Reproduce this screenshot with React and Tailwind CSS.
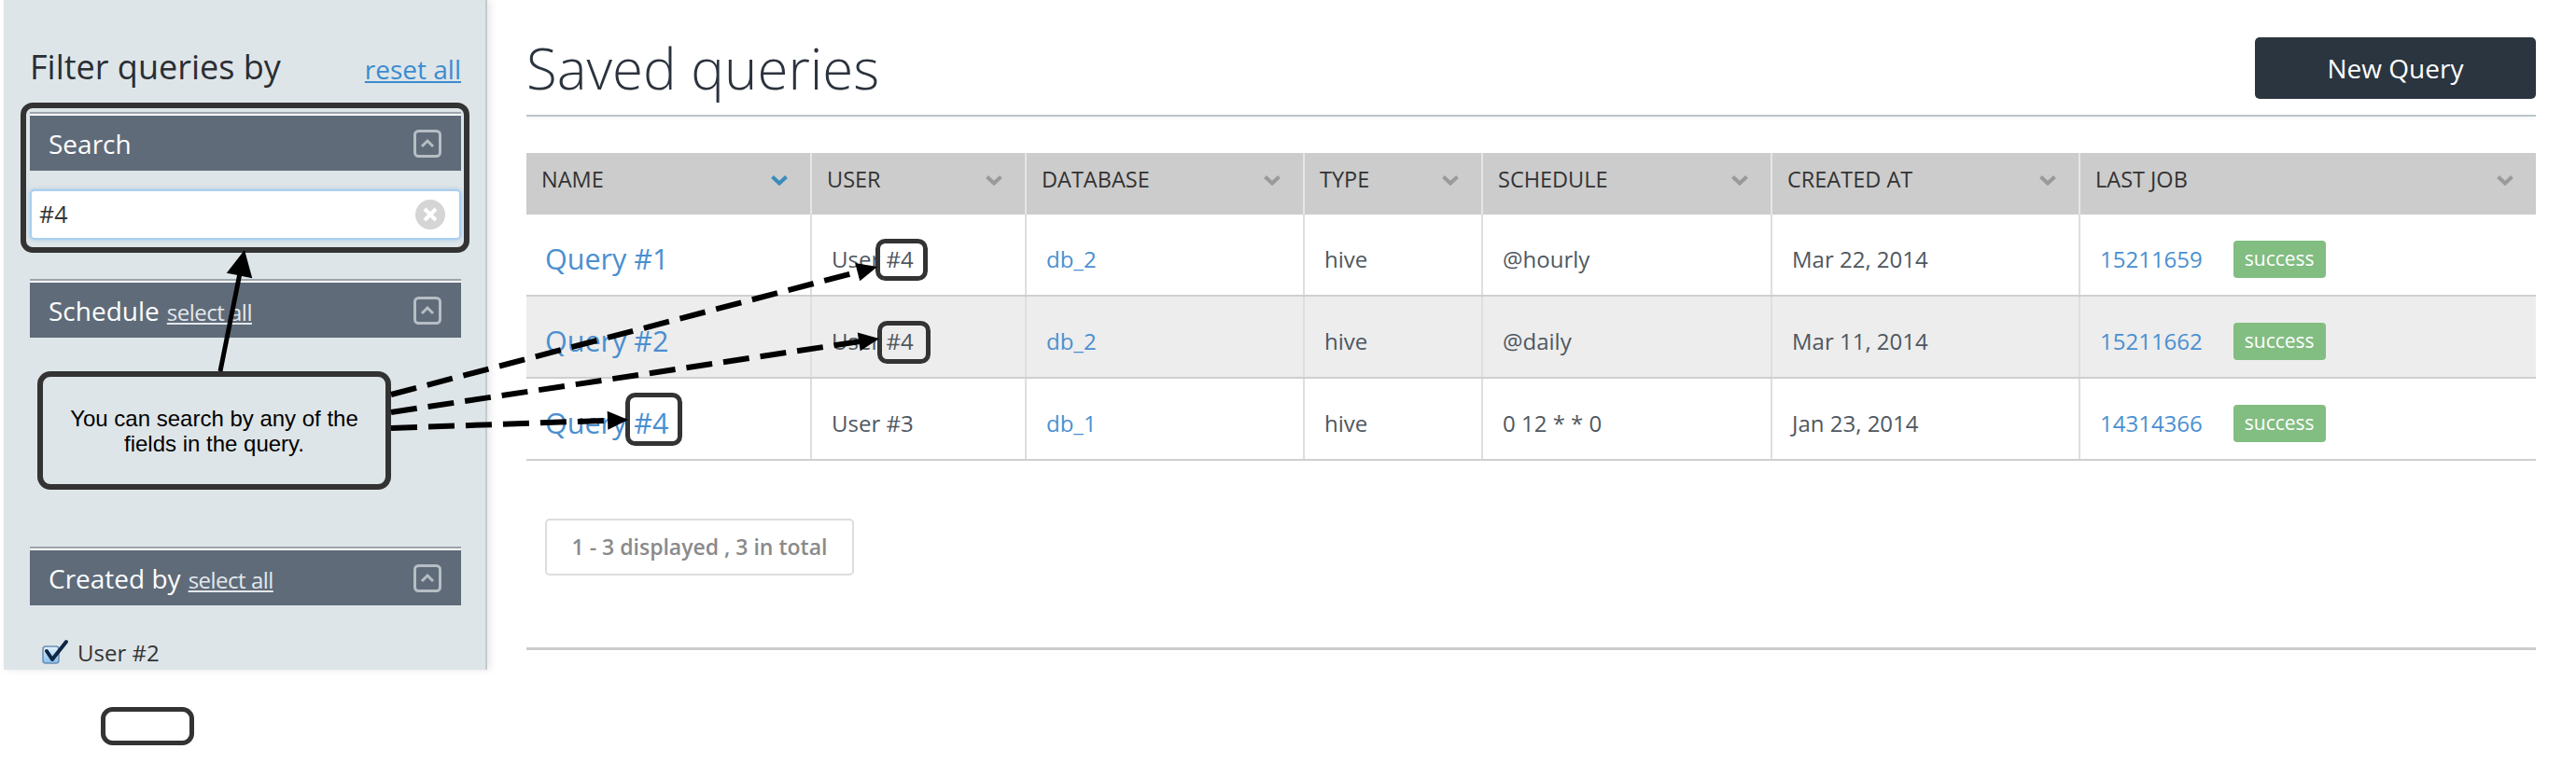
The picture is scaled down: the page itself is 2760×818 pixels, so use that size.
import React from "react";

const cols = "grid-cols-[304px_230px_298px_191px_310px_330px_490px]";

function Chevron({ color }) {
  return (
    <svg width="20" height="12" viewBox="0 0 20 12">
      <polyline points="2.5,2.5 10,9.5 17.5,2.5" fill="none" stroke={color} strokeWidth="4" strokeLinejoin="miter" />
    </svg>
  );
}

function CollapseIcon() {
  return (
    <svg width="30" height="30" viewBox="0 0 30 30">
      <rect x="1.5" y="1.5" width="27" height="27" rx="4" fill="none" stroke="#b6bdc4" strokeWidth="3" />
      <polyline points="9,18 15,12 21,18" fill="none" stroke="#b6bdc4" strokeWidth="3" />
    </svg>
  );
}

function ClearIcon() {
  return (
    <svg width="32" height="32" viewBox="0 0 32 32">
      <circle cx="16" cy="16" r="16" fill="#d5d5d5" />
      <line x1="10" y1="10" x2="22" y2="22" stroke="#fff" strokeWidth="4" />
      <line x1="22" y1="10" x2="10" y2="22" stroke="#fff" strokeWidth="4" />
    </svg>
  );
}

function CheckIcon() {
  return (
    <svg width="32" height="30" viewBox="0 0 32 30">
      <defs>
        <linearGradient id="cbg" x1="0" y1="0" x2="0" y2="1">
          <stop offset="0" stopColor="#e4f2fc" />
          <stop offset="1" stopColor="#86bfee" />
        </linearGradient>
      </defs>
      <rect x="2" y="8" width="17" height="18" rx="3" fill="url(#cbg)" stroke="#6a8fb3" strokeWidth="1.5" />
      <polyline points="6,13 12,22 27,3" fill="none" stroke="#0f2745" strokeWidth="4" strokeLinecap="round" strokeLinejoin="round" />
    </svg>
  );
}

function PanelHeader({ title, selectAll }) {
  return (
    <div>
      <div className="h-[2px] bg-[#9ba4aa]" />
      <div className="h-[2px] bg-white" />
      <div className="h-[59px] bg-[#5f6b79] flex items-center justify-between pl-[20px] pr-[21px]">
        <div className="flex items-baseline">
          <span className="text-white text-[28px]">{title}</span>
          {selectAll && (
            <span className="ml-[8px] text-[24px] text-[#e3e7eb] underline tracking-[-0.5px]">select all</span>
          )}
        </div>
        <CollapseIcon />
      </div>
    </div>
  );
}

function Sidebar() {
  return (
    <aside className="ml-[4px] w-[518px] h-[718px] shrink-0 bg-[#dee5e8] border-r-2 border-[#c4cbcf] shadow-[3px_0_8px_rgba(0,0,0,0.10)] pl-[28px] pr-[26px] pt-[52px] flex flex-col">
      <div className="flex items-baseline justify-between h-[40px] leading-[40px]">
        <span className="text-[36px] text-[#2a2e33]">Filter queries by</span>
        <span className="text-[28px] text-[#3b8bd0] underline">reset all</span>
      </div>
      <div className="mt-[28px]">
        <PanelHeader title="Search" />
      </div>
      <div className="mt-[20px] h-[54px] bg-white border-2 border-[#a9cff0] rounded-[5px] flex items-center justify-between pl-[8px] pr-[15px] shadow-[0_0_4px_rgba(100,170,230,0.5)]">
        <span className="text-[25px] text-[#333]">#4</span>
        <ClearIcon />
      </div>
      <div className="mt-[42px]">
        <PanelHeader title="Schedule" selectAll />
      </div>
      <div className="mt-[224px]">
        <PanelHeader title="Created by" selectAll />
      </div>
      <div className="mt-[36px] flex items-center h-[30px] pl-[12px]">
        <CheckIcon />
        <span className="ml-[7px] text-[24px] text-[#333]">User #2</span>
      </div>
    </aside>
  );
}

const headers = ["NAME", "USER", "DATABASE", "TYPE", "SCHEDULE", "CREATED AT", "LAST JOB"];

const rows = [
  { name: "Query #1", user: "User #4", db: "db_2", type: "hive", sched: "@hourly", created: "Mar 22, 2014", job: "15211659", bg: "bg-white" },
  { name: "Query #2", user: "User #4", db: "db_2", type: "hive", sched: "@daily", created: "Mar 11, 2014", job: "15211662", bg: "bg-[#ededed]" },
  { name: "Query #4", user: "User #3", db: "db_1", type: "hive", sched: "0 12 * * 0", created: "Jan 23, 2014", job: "14314366", bg: "bg-white" },
];

function Cell({ first, children }) {
  return (
    <div className={"flex items-center pt-[10px] " + (first ? "pl-[20px]" : "pl-[21px] border-l-2 border-[#dedede]")}>
      {children}
    </div>
  );
}

function Main() {
  return (
    <main className="ml-[42px] w-[2153px] shrink-0 pt-[40px] flex flex-col">
      <div className="flex justify-between items-start h-[66px]">
        <h1 className="text-[60px] font-light leading-[66px] text-[#2b333d]">Saved queries</h1>
        <button className="w-[301px] h-[66px] bg-[#2b3540] rounded-[5px] text-white text-[28px]">New Query</button>
      </div>
      <div className="mt-[17px] h-[2px] bg-[#bac4c8] shadow-[0_2px_3px_rgba(0,0,0,0.06)]" />
      <div className="mt-[39px]">
        <div className={"grid " + cols + " h-[66px] bg-[#cccccc]"}>
          {headers.map((h, i) => (
            <div
              key={h}
              className={"flex items-center justify-between pb-[8px] pr-[23px] " + (i === 0 ? "pl-[16px]" : "pl-[16px] border-l-2 border-[#e6e6e6]")}
            >
              <span className="text-[23.5px] text-[#333]">{h}</span>
              <Chevron color={i === 0 ? "#3a8cba" : "#9a9a9a"} />
            </div>
          ))}
        </div>
        {rows.map((r) => (
          <div key={r.name} className={"grid " + cols + " h-[88px] border-b-2 border-[#cfcfcf] " + r.bg}>
            <Cell first>
              <span className="text-[30.5px] text-[#4a8fd1]">{r.name}</span>
            </Cell>
            <Cell>
              <span className="text-[24px] text-[#4f5760]">{r.user}</span>
            </Cell>
            <Cell>
              <span className="text-[24px] text-[#4a8fd1]">{r.db}</span>
            </Cell>
            <Cell>
              <span className="text-[24px] text-[#4f5760]">{r.type}</span>
            </Cell>
            <Cell>
              <span className="text-[24px] text-[#4f5760]">{r.sched}</span>
            </Cell>
            <Cell>
              <span className="text-[24px] text-[#4f5760]">{r.created}</span>
            </Cell>
            <Cell>
              <span className="text-[24px] text-[#4a8fd1]">{r.job}</span>
              <span className="ml-[33px] h-[40px] px-[12px] flex items-center bg-[#82bd82] rounded-[4px] text-white text-[21px]">success</span>
            </Cell>
          </div>
        ))}
      </div>
      <div className="mt-[62px] ml-[20px] w-[331px] h-[61px] border-2 border-[#dddddd] rounded-[5px] flex items-center justify-center">
        <span className="text-[23px] font-semibold text-[#8a8a8a]">1 - 3 displayed , 3 in total</span>
      </div>
      <div className="mt-[77px] h-[3px] bg-[#cccccc]" />
    </main>
  );
}

function Arrow({ x1, y1, x2, y2, dashed, headLen, headW, sw }) {
  const dx = x2 - x1;
  const dy = y2 - y1;
  const L = Math.sqrt(dx * dx + dy * dy);
  const ux = dx / L;
  const uy = dy / L;
  const bx = x2 - ux * headLen;
  const by = y2 - uy * headLen;
  const px = -uy;
  const py = ux;
  const pts = `${x2},${y2} ${bx + px * headW},${by + py * headW} ${bx - px * headW},${by - py * headW}`;
  return (
    <g>
      <line
        x1={x1}
        y1={y1}
        x2={bx + ux * 2}
        y2={by + uy * 2}
        stroke="#000"
        strokeWidth={sw}
        strokeDasharray={dashed ? "28 12" : undefined}
      />
      <polygon points={pts} fill="#000" />
    </g>
  );
}

function Annotations() {
  return (
    <>
      <svg className="absolute left-0 top-0 pointer-events-none" width="2760" height="818" viewBox="0 0 2760 818">
        <rect x="25" y="113" width="475" height="155" rx="10" fill="none" stroke="#333" strokeWidth="6" />
        <rect x="43" y="401" width="373" height="121" rx="11" fill="none" stroke="#333" strokeWidth="6" />
        <rect x="940.5" y="258.5" width="51" height="40" rx="8" fill="none" stroke="#333" strokeWidth="5" />
        <rect x="942.5" y="346.5" width="52" height="41" rx="8" fill="none" stroke="#333" strokeWidth="5" />
        <rect x="672.5" y="423.5" width="56" height="52" rx="8" fill="none" stroke="#333" strokeWidth="5" />
        <rect x="110.5" y="760.5" width="95" height="36" rx="10" fill="none" stroke="#333" strokeWidth="5" />
        <Arrow x1={236} y1={398} x2={262} y2={268} headLen={28} headW={14} sw={5} />
        <Arrow x1={419} y1={423} x2={940} y2={286} dashed headLen={22} headW={10} sw={6} />
        <Arrow x1={419} y1={442} x2={942} y2={363} dashed headLen={22} headW={10} sw={6} />
        <Arrow x1={419} y1={459} x2={673} y2={450} dashed headLen={22} headW={10} sw={6} />
      </svg>
      <div className="absolute left-[43px] top-[401px] w-[373px] h-[121px] flex items-center justify-center text-center font-['Liberation_Sans',Arial,sans-serif] text-[24px] leading-[27px] text-black pointer-events-none">
        <span>
          You can search by any of the
          <br />
          fields in the query.
        </span>
      </div>
    </>
  );
}

export default function App() {
  return (
    <div className="relative w-[2760px] h-[818px] bg-white font-['Open_Sans','Noto_Sans',sans-serif] overflow-hidden">
      <div className="flex items-start">
        <Sidebar />
        <Main />
      </div>
      <Annotations />
    </div>
  );
}
